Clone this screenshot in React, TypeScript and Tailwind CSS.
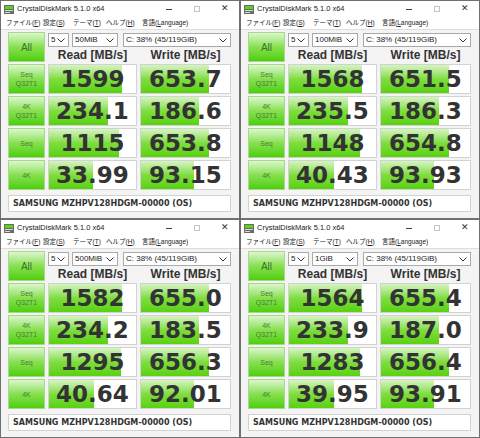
import React from 'react';

const winData = [
    { size: '50MiB', vals: [['1599', '653.7'], ['234.1', '186.6'], ['1115', '653.8'], ['33.99', '93.15']] },
    { size: '100MiB', vals: [['1568', '651.5'], ['235.5', '186.3'], ['1148', '654.8'], ['40.43', '93.93']] },
    { size: '500MiB', vals: [['1582', '655.0'], ['234.2', '183.5'], ['1295', '656.3'], ['40.64', '92.01']] },
    { size: '1GiB', vals: [['1564', '655.4'], ['233.9', '187.0'], ['1283', '656.4'], ['39.95', '93.91']] },
];

const labels = [['Seq', 'Q32T1'], ['4K', 'Q32T1'], ['Seq'], ['4K']];

const menus = [
    { jp: 'ファイル', key: 'F', w: 'w-[37px]' },
    { jp: '設定', key: 'S', w: 'w-[30px]' },
    { jp: 'テーマ', key: 'T', w: 'w-[33px]' },
    { jp: 'ヘルプ', key: 'H', w: 'w-[36px]' },
];

const barPct = (v: string) => Math.min(100, ((Math.log10(parseFloat(v)) + 1) / 5) * 100);

function Chevron() {
    return (
        <svg width="8" height="5" viewBox="0 0 8 5" className="shrink-0">
            <polyline points="0.5,0.5 4,4 7.5,0.5" fill="none" stroke="#333" strokeWidth="1" />
        </svg>
    );
}

function Select({ text, w }: { text: string; w: string }) {
    return (
        <div className={`${w} h-[14px] flex items-center justify-between border border-[#a9a9a9] bg-white pl-[2px] pr-[3px] text-[8px] text-[#222]`}>
            <span>{text}</span>
            <Chevron />
        </div>
    );
}

function Cell({ value }: { value: string }) {
    return (
        <div className="relative h-[30px] border border-[#d2d2d2] bg-white overflow-hidden">
            <div
                className="absolute left-0 top-0 bottom-0 bg-linear-to-b from-[#d6f4c0] via-[#7fdd3c] to-[#58d20c]"
                style={{ width: `${barPct(value)}%` }}
            />
            <div className="relative h-full flex items-center justify-center font-['DejaVu_Sans',sans-serif] font-bold text-[23px] leading-none text-[#333]">
                {value}
            </div>
        </div>
    );
}

function GreenButton({ children, className }: { children: React.ReactNode; className?: string }) {
    return (
        <div className={`flex flex-col items-center justify-center border border-[#a8d890] bg-linear-to-b from-[#dcf5cb] via-[#86e04c] to-[#4ccf00] ${className ?? ''}`}>
            {children}
        </div>
    );
}

function Window({ size, vals }: { size: string; vals: string[][] }) {
    return (
        <div className="w-[240px] h-[219px] border border-[#707070] bg-[#f4f4f4] flex flex-col font-['Liberation_Sans','Noto_Sans_CJK_JP',sans-serif]">
            <div className="h-[16px] shrink-0 bg-white flex items-center pl-[3px]">
                <svg width="10" height="9" viewBox="0 0 10 9" className="shrink-0">
                    <rect x="0" y="0" width="10" height="9" fill="#6a6a6a" />
                    <rect x="1" y="1" width="8" height="3" fill="#5cd21a" />
                    <rect x="1" y="5" width="8" height="1" fill="#d8d8d8" />
                    <rect x="1" y="7" width="5" height="1" fill="#d8d8d8" />
                </svg>
                <span className="ml-[3px] text-[7.5px] text-[#222] whitespace-nowrap">CrystalDiskMark 5.1.0 x64</span>
                <div className="ml-auto flex h-full">
                    <div className="w-[28px] flex items-center justify-center">
                        <div className="w-[6px] h-px bg-[#444]" />
                    </div>
                    <div className="w-[28px] flex items-center justify-center">
                        <div className="w-[6px] h-[6px] border border-[#c4c4c4]" />
                    </div>
                    <div className="w-[28px] flex items-center justify-center text-[9px] text-[#333]">✕</div>
                </div>
            </div>
            <div className="h-[12px] shrink-0 bg-white flex items-center pl-[5px] text-[6.5px] leading-none text-[#222] whitespace-nowrap">
                {menus.map((m) => (
                    <span key={m.key} className={m.w}>
                        {m.jp}(<u>{m.key}</u>)
                    </span>
                ))}
                <span>言語(<u>L</u>anguage)</span>
            </div>
            <div className="flex-1 border-t border-[#dedede] pt-[2px] pl-[7px] pr-[8px]">
                <div className="flex gap-x-[3px]">
                    <GreenButton className="w-[37px] h-[30px]">
                        <span className="text-[10px] text-[#3f6d2e]">All</span>
                    </GreenButton>
                    <div className="w-[183px]">
                        <div className="mt-[1px] flex">
                            <Select text="5" w="w-[21px]" />
                            <div className="ml-[3px]">
                                <Select text={size} w="w-[46px]" />
                            </div>
                            <div className="ml-[5px]">
                                <Select text="C: 38% (45/119GiB)" w="w-[108px]" />
                            </div>
                        </div>
                        <div className="grid grid-cols-[89px_91px] gap-x-[3px] h-[15px] items-center text-[12px] font-bold text-[#333] leading-none">
                            <div className="text-center">Read [MB/s]</div>
                            <div className="text-center">Write [MB/s]</div>
                        </div>
                    </div>
                </div>
                {vals.map((row, i) => (
                    <div key={i} className="mt-[2px] grid grid-cols-[37px_89px_91px] gap-x-[3px] h-[30px]">
                        <GreenButton className="h-[30px]">
                            {labels[i].map((l) => (
                                <span key={l} className="text-[7px] leading-[9px] text-[#4d7a3a]">{l}</span>
                            ))}
                        </GreenButton>
                        <Cell value={row[0]} />
                        <Cell value={row[1]} />
                    </div>
                ))}
                <div className="mt-[5px] h-[17px] border border-[#d2d2d2] bg-white flex items-center pl-[4px] font-['DejaVu_Sans',sans-serif] font-bold text-[8px] text-[#333]">
                    SAMSUNG MZHPV128HDGM-00000 (OS)
                </div>
            </div>
        </div>
    );
}

export default function App() {
    return (
        <div className="w-[480px] h-[438px] grid grid-cols-[240px_240px] grid-rows-[219px_219px] bg-[#707070]">
            {winData.map((w) => (
                <Window key={w.size} size={w.size} vals={w.vals} />
            ))}
        </div>
    );
}
